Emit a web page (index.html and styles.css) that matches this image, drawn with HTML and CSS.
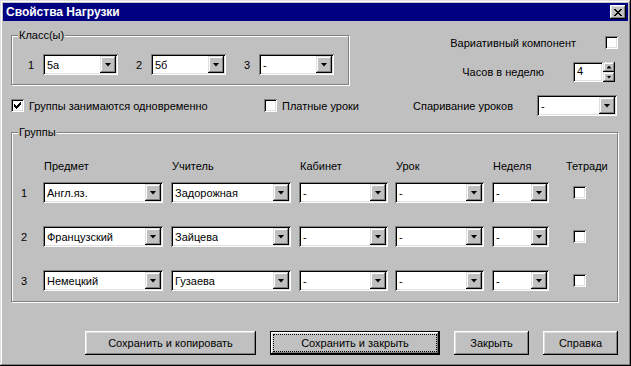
FILE: index.html
```html
<!DOCTYPE html>
<html lang="ru">

<head>
    <meta charset="UTF-8">
    <title>Свойства Нагрузки</title>
    <link rel="stylesheet" href="styles.css">
</head>

<body>
    <div class="window">
        <!-- заголовок окна -->
        <div class="titlebar">
            <span class="title">Свойства Нагрузки</span>
            <div class="close">
                <svg width="8" height="7" viewBox="0 0 8 7">
                    <path d="M0 0h2v1h1v1h2v-1h1v-1h2v1h-1v1h-1v1h-1v1h1v1h1v1h1v1h-2v-1h-1v-1h-2v1h-1v1h-2v-1h1v-1h1v-1h1v-1h-1v-1h-1z" fill="#000"/>
                </svg>
            </div>
        </div>

        <div class="content">
            <!-- классы и параметры -->
            <div class="top">
                <fieldset class="box box-class">
                    <legend>Класс(ы)</legend>
                    <div class="cls-row">
                        <div class="cls-item"><span class="num">1</span>
                            <div class="combo w-cls"><span class="val">5а</span><span class="drop"></span></div>
                        </div>
                        <div class="cls-item"><span class="num">2</span>
                            <div class="combo w-cls"><span class="val">5б</span><span class="drop"></span></div>
                        </div>
                        <div class="cls-item"><span class="num">3</span>
                            <div class="combo w-cls"><span class="val">-</span><span class="drop"></span></div>
                        </div>
                    </div>
                </fieldset>

                <div class="right">
                    <div class="opt-row row-var">
                        <span>Вариативный компонент</span>
                        <span class="check"></span>
                    </div>
                    <div class="opt-row row-hours">
                        <span>Часов в неделю</span>
                        <div class="spin">
                            <div class="spin-field">4</div>
                            <div class="spin-btns">
                                <span class="spin-btn up"></span>
                                <span class="spin-btn down"></span>
                            </div>
                        </div>
                    </div>
                </div>
            </div>

            <!-- флажки -->
            <div class="opts">
                <div class="opt opt-1">
                    <span class="check checked">
                        <svg width="7" height="7" viewBox="0 0 7 7">
                            <path d="M0 2h1v1h1v1h1v-1h1v-1h1v-1h1v-1h1v3h-1v1h-1v1h-1v1h-1v1h-1v-1h-1v-1h-1z" fill="#000"/>
                        </svg>
                    </span>
                    <span class="opt-label">Группы занимаются одновременно</span>
                </div>
                <div class="opt opt-2">
                    <span class="check"></span>
                    <span class="opt-label">Платные уроки</span>
                </div>
                <span class="pair-label">Спаривание уроков</span>
                <div class="combo w-pair"><span class="val">-</span><span class="drop"></span></div>
            </div>

            <!-- группы -->
            <fieldset class="box box-groups">
                <legend>Группы</legend>
                <div class="g-head">
                    <span class="c0"></span>
                    <span class="c1">Предмет</span>
                    <span class="c2">Учитель</span>
                    <span class="c3">Кабинет</span>
                    <span class="c4">Урок</span>
                    <span class="c5">Неделя</span>
                    <span class="c6">Тетради</span>
                </div>
                <div class="g-row">
                    <span class="c0">1</span>
                    <div class="c1"><div class="combo w1"><span class="val">Англ.яз.</span><span class="drop"></span></div></div>
                    <div class="c2"><div class="combo w2"><span class="val">Задорожная</span><span class="drop"></span></div></div>
                    <div class="c3"><div class="combo w3"><span class="val">-</span><span class="drop"></span></div></div>
                    <div class="c4"><div class="combo w4"><span class="val">-</span><span class="drop"></span></div></div>
                    <div class="c5"><div class="combo w5"><span class="val">-</span><span class="drop"></span></div></div>
                    <div class="c6"><span class="check"></span></div>
                </div>
                <div class="g-row">
                    <span class="c0">2</span>
                    <div class="c1"><div class="combo w1"><span class="val">Французский</span><span class="drop"></span></div></div>
                    <div class="c2"><div class="combo w2"><span class="val">Зайцева</span><span class="drop"></span></div></div>
                    <div class="c3"><div class="combo w3"><span class="val">-</span><span class="drop"></span></div></div>
                    <div class="c4"><div class="combo w4"><span class="val">-</span><span class="drop"></span></div></div>
                    <div class="c5"><div class="combo w5"><span class="val">-</span><span class="drop"></span></div></div>
                    <div class="c6"><span class="check"></span></div>
                </div>
                <div class="g-row">
                    <span class="c0">3</span>
                    <div class="c1"><div class="combo w1"><span class="val">Немецкий</span><span class="drop"></span></div></div>
                    <div class="c2"><div class="combo w2"><span class="val">Гузаева</span><span class="drop"></span></div></div>
                    <div class="c3"><div class="combo w3"><span class="val">-</span><span class="drop"></span></div></div>
                    <div class="c4"><div class="combo w4"><span class="val">-</span><span class="drop"></span></div></div>
                    <div class="c5"><div class="combo w5"><span class="val">-</span><span class="drop"></span></div></div>
                    <div class="c6"><span class="check"></span></div>
                </div>
            </fieldset>

            <!-- кнопки -->
            <div class="buttons">
                <div class="btn btn-wide">Сохранить и копировать</div>
                <div class="btn btn-wide btn-default"><span class="focus">Сохранить и закрыть</span></div>
                <div class="btn btn-small">Закрыть</div>
                <div class="btn btn-small">Справка</div>
            </div>
        </div>
    </div>
</body>

</html>
```

FILE: styles.css
```css
* {
    box-sizing: border-box;
}

body {
    margin: 0;
    background-color: #c0c0c0;
    font-family: "Liberation Sans", Arial, sans-serif;
    font-size: 11px;
    color: #000;
}

.window {
    width: 631px;
    height: 366px;
    padding: 3px;
    background-color: #c0c0c0;
    box-shadow: inset -1px -1px 0 #000, inset 1px 1px 0 #dfdfdf,
        inset -2px -2px 0 #808080, inset 2px 2px 0 #fff;
}

/* заголовок */
.titlebar {
    height: 18px;
    padding-left: 3px;
    display: flex;
    align-items: center;
    justify-content: space-between;
    background-color: #000080;
    color: #fff;
    font-size: 12px;
    font-weight: bold;
}

.close {
    width: 16px;
    height: 14px;
    margin-right: 2px;
    display: flex;
    align-items: center;
    justify-content: center;
    background-color: #c0c0c0;
    box-shadow: inset -1px -1px 0 #000, inset 1px 1px 0 #fff,
        inset -2px -2px 0 #808080, inset 2px 2px 0 #dfdfdf;
}

.content {
    padding: 8px 0 0 8px;
}

/* рамки групп */
.box {
    margin: 0;
    padding: 0;
    min-width: 0;
    border: 1px solid #808080;
    box-shadow: 1px 1px 0 #fff, inset 1px 1px 0 #fff;
}

.box>legend {
    margin-left: 6px;
    padding: 0 1px;
    line-height: 13px;
    background-color: #c0c0c0;
}

.top {
    display: flex;
}

.box-class {
    width: 338px;
    height: 56px;
}

.cls-row {
    display: flex;
    align-items: center;
    gap: 18px;
    padding: 12px 0 0 16px;
}

.cls-item {
    display: flex;
    align-items: center;
}

.cls-item>.num {
    width: 15px;
}

.right {
    flex: 1;
    display: flex;
    flex-direction: column;
    align-items: flex-end;
    padding-right: 10px;
}

.opt-row {
    display: flex;
    align-items: center;
    gap: 29px;
}

.row-var {
    margin-top: 7px;
    height: 13px;
}

.row-hours {
    margin-top: 13px;
    height: 20px;
    margin-right: 3px;
}

/* поле со списком */
.combo {
    height: 21px;
    display: flex;
    align-items: center;
    justify-content: space-between;
    padding: 2px;
    background-color: #fff;
    box-shadow: inset 1px 1px 0 #808080, inset -1px -1px 0 #fff,
        inset 2px 2px 0 #000, inset -2px -2px 0 #dfdfdf;
}

.combo>.val {
    padding-left: 2px;
    white-space: nowrap;
    overflow: hidden;
}

.combo>.drop {
    flex: none;
    width: 16px;
    height: 17px;
    display: flex;
    align-items: center;
    justify-content: center;
    background-color: #c0c0c0;
    box-shadow: inset -1px -1px 0 #000, inset 1px 1px 0 #dfdfdf,
        inset -2px -2px 0 #808080, inset 2px 2px 0 #fff;
}

.combo>.drop::after {
    content: "";
    width: 7px;
    height: 4px;
    background-color: #000;
    clip-path: polygon(0 0, 100% 0, 50% 100%);
}

.w-cls {
    width: 75px;
}

.w-pair {
    width: 80px;
}

.w1,
.w2 {
    width: 120px;
}

.w3,
.w4 {
    width: 89px;
}

.w5 {
    width: 57px;
}

/* счётчик */
.spin {
    display: flex;
    height: 20px;
}

.spin-field {
    width: 30px;
    padding: 3px 0 0 4px;
    background-color: #fff;
    box-shadow: inset 1px 1px 0 #808080, inset -1px -1px 0 #fff,
        inset 2px 2px 0 #000, inset -2px -2px 0 #dfdfdf;
}

.spin-btns {
    width: 12px;
    display: flex;
    flex-direction: column;
}

.spin-btn {
    height: 10px;
    display: flex;
    align-items: center;
    justify-content: center;
    background-color: #c0c0c0;
    box-shadow: inset -1px -1px 0 #000, inset 1px 1px 0 #dfdfdf,
        inset -2px -2px 0 #808080, inset 2px 2px 0 #fff;
}

.spin-btn::after {
    content: "";
    width: 5px;
    height: 3px;
    background-color: #000;
}

.spin-btn.up::after {
    clip-path: polygon(50% 0, 100% 100%, 0 100%);
}

.spin-btn.down::after {
    clip-path: polygon(0 0, 100% 0, 50% 100%);
}

/* флажки */
.check {
    flex: none;
    width: 13px;
    height: 13px;
    display: inline-flex;
    align-items: center;
    justify-content: center;
    background-color: #fff;
    box-shadow: inset 1px 1px 0 #808080, inset -1px -1px 0 #fff,
        inset 2px 2px 0 #000, inset -2px -2px 0 #dfdfdf;
}

.opts {
    display: flex;
    align-items: center;
    height: 21px;
    margin-top: 10px;
}

.opt {
    display: flex;
    align-items: center;
}

.opt-label {
    margin-left: 5px;
}

.opt-1 {
    width: 253px;
}

.opt-2 {
    width: 149px;
}

.pair-label {
    width: 124px;
}

/* таблица групп */
.box-groups {
    width: 607px;
    margin-top: 10px;
    padding: 20px 0 10px;
}

.box-groups>legend {
    margin-left: 6px;
}

.g-head,
.g-row {
    display: flex;
    align-items: center;
}

.g-head {
    height: 14px;
}

.g-head>span {
    padding-left: 1px;
}

.g-row {
    height: 21px;
    margin-top: 23px;
}

.g-head+.g-row {
    margin-top: 9px;
}

.c0 {
    width: 31px;
    padding-left: 9px;
}

.g-head>.c0 {
    padding-left: 0;
}

.c1,
.c2 {
    width: 128px;
}

.c3 {
    width: 96px;
}

.c4 {
    width: 97px;
}

.c5 {
    width: 73px;
}

.c6 {
    flex: 1;
}

.g-row>.c6 {
    padding-left: 8px;
    display: flex;
}

/* кнопки */
.buttons {
    display: flex;
    justify-content: flex-end;
    gap: 14px;
    margin-top: 29px;
    padding-right: 10px;
}

.btn {
    height: 24px;
    display: flex;
    align-items: center;
    justify-content: center;
    background-color: #c0c0c0;
    box-shadow: inset -1px -1px 0 #000, inset 1px 1px 0 #fff,
        inset -2px -2px 0 #808080, inset 2px 2px 0 #dfdfdf;
}

.btn-wide {
    width: 171px;
}

.btn-small {
    width: 75px;
}

.btn-default {
    width: 170px;
    border: 1px solid #000;
    padding: 3px;
}

.btn-default>.focus {
    flex: 1;
    align-self: stretch;
    display: flex;
    align-items: center;
    justify-content: center;
    outline: 1px dotted #000;
}
```
